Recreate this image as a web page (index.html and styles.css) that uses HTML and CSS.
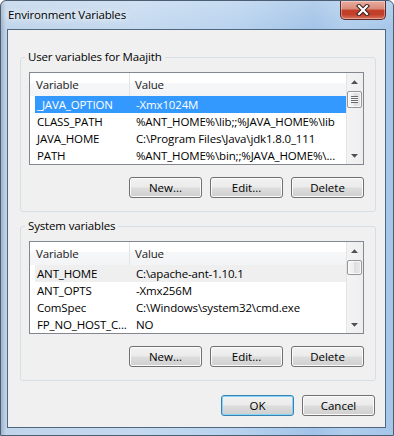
FILE: index.html
```html
<!DOCTYPE html>
<html>
<head>
<meta charset="utf-8">
<title>Environment Variables</title>
<link rel="stylesheet" href="styles.css">
</head>
<body>
<div class="window">
  <div class="titlebar">
    <div class="title">Environment Variables</div>
    <div class="close">
      <svg width="14" height="12" viewBox="0 0 14 12">
        <path d="M3 2 L11 10 M11 2 L3 10" stroke="#3a1e1e" stroke-width="4.2" stroke-linecap="square" fill="none"/>
        <path d="M3 2 L11 10 M11 2 L3 10" stroke="#ffffff" stroke-width="2.2" stroke-linecap="square" fill="none"/>
      </svg>
    </div>
  </div>
  <div class="client">
    <fieldset class="group">
      <legend>User variables for Maajith</legend>
      <div class="list">
        <div class="list-main">
          <div class="header"><div class="h1">Variable</div><div class="h2">Value</div></div>
          <div class="row sel"><div class="c1">_JAVA_OPTION</div><div class="c2">-Xmx1024M</div></div>
          <div class="row"><div class="c1">CLASS_PATH</div><div class="c2">%ANT_HOME%\lib;;%JAVA_HOME%\lib</div></div>
          <div class="row"><div class="c1">JAVA_HOME</div><div class="c2">C:\Program Files\Java\jdk1.8.0_111</div></div>
          <div class="row"><div class="c1">PATH</div><div class="c2">%ANT_HOME%\bin;;%JAVA_HOME%\...</div></div>
        </div>
        <div class="scroll">
          <div class="arrow"><svg width="7" height="4" viewBox="0 0 7 4"><path d="M0 4 L3.5 0.3 L7 4 Z" fill="#505050"/></svg></div>
          <div class="thumb"><span class="grip"></span></div>
          <div class="track"></div>
          <div class="arrow"><svg width="7" height="4" viewBox="0 0 7 4"><path d="M0 0 L3.5 3.7 L7 0 Z" fill="#505050"/></svg></div>
        </div>
      </div>
      <div class="buttons">
        <button class="btn">New...</button>
        <button class="btn">Edit...</button>
        <button class="btn">Delete</button>
      </div>
    </fieldset>
    <fieldset class="group">
      <legend>System variables</legend>
      <div class="list">
        <div class="list-main">
          <div class="header"><div class="h1">Variable</div><div class="h2">Value</div></div>
          <div class="row dim"><div class="c1">ANT_HOME</div><div class="c2">C:\apache-ant-1.10.1</div></div>
          <div class="row"><div class="c1">ANT_OPTS</div><div class="c2">-Xmx256M</div></div>
          <div class="row"><div class="c1">ComSpec</div><div class="c2">C:\Windows\system32\cmd.exe</div></div>
          <div class="row"><div class="c1">FP_NO_HOST_C...</div><div class="c2">NO</div></div>
        </div>
        <div class="scroll">
          <div class="arrow"><svg width="7" height="4" viewBox="0 0 7 4"><path d="M0 4 L3.5 0.3 L7 4 Z" fill="#505050"/></svg></div>
          <div class="thumb small"></div>
          <div class="track"></div>
          <div class="arrow"><svg width="7" height="4" viewBox="0 0 7 4"><path d="M0 0 L3.5 3.7 L7 0 Z" fill="#505050"/></svg></div>
        </div>
      </div>
      <div class="buttons">
        <button class="btn">New...</button>
        <button class="btn">Edit...</button>
        <button class="btn">Delete</button>
      </div>
    </fieldset>
    <div class="dialog-buttons">
      <button class="btn default">OK</button>
      <button class="btn">Cancel</button>
    </div>
  </div>
</div>
</body>
</html>
```
FILE: styles.css
```css
* { box-sizing: border-box; }
html, body { margin: 0; padding: 0; }
body {
  width: 394px;
  height: 436px;
  overflow: hidden;
  background: #ffffff;
  font-family: "Open Sans", "Noto Sans", sans-serif;
  font-size: 11.5px;
  letter-spacing: -0.15px;
  color: #000;
}
.window {
  width: 394px;
  height: 436px;
  display: flex;
  flex-direction: column;
  border: 1px solid #4b5e74;
  border-radius: 6px 6px 0 0;
  background:
    linear-gradient(to bottom, rgba(255,255,255,0.2), rgba(255,255,255,0) 30px),
    linear-gradient(to right, #9fb3c9 0px, #c0d5ea 5px, #c4d9ef 35%, #b8d2ee 60%, #a2c3e8 80%, #b0cdec 88%, #a6c6e9 100%);
}
.titlebar {
  height: 28px;
  display: flex;
  align-items: flex-start;
}
.title {
  flex: 1;
  padding: 6px 0 0 7px;
  line-height: 16px;
  font-size: 11.5px;
  color: #000;
  text-shadow: 0 0 6px #ffffff, 0 0 10px rgba(255,255,255,0.9);
}
.close {
  width: 46px;
  height: 19px;
  margin-right: 7px;
  border: 1px solid #5a2b28;
  border-top: none;
  border-radius: 0 0 5px 5px;
  background: linear-gradient(to bottom, #e8ad9f 0%, #d98a79 45%, #c2402a 50%, #c23f29 75%, #d8735f 100%);
  box-shadow: inset 0 0 0 1px rgba(255,255,255,0.35);
  display: flex;
  align-items: center;
  justify-content: center;
}
.client {
  margin: 0 7px 0 6px;
  height: 399px;
  border: 1px solid #4f6681;
  background: #f0f0f0;
  padding: 20px 9px 0 12px;
  display: flex;
  flex-direction: column;
}
.group {
  margin: 0;
  padding: 8px 11px 13px 8px;
  border: 1px solid #d5dfe5;
  border-radius: 3px;
  min-width: 0;
}
.group + .group { margin-top: 7px; }
.group legend {
  padding: 0 3px;
  margin-left: -4px;
  line-height: 14px;
}
.list {
  height: 93px;
  border: 1px solid #828790;
  background: #ffffff;
  display: flex;
}
.list-main { flex: 1; min-width: 0; }
.header {
  height: 23px;
  display: flex;
  background: linear-gradient(to bottom, #ffffff 0, #ffffff 42%, #f6f7f8 42%, #f3f4f6 100%);
  line-height: 23px;
  color: #1a1a1a;
}
.h1 {
  width: 100px;
  padding-left: 6px;
  border-right: 1px solid #e3e5e8;
}
.h2 { flex: 1; padding-left: 5px; }
.row {
  height: 17px;
  line-height: 17px;
  margin-left: 5px;
  display: flex;
  white-space: nowrap;
}
.row .c1 { width: 94px; padding-left: 2px; overflow: hidden; }
.row .c2 { flex: 1; min-width: 0; padding-left: 7px; overflow: hidden; }
.row.sel { background: #3399ff; color: #ffffff; }
.row.dim { background: #efefef; }
.scroll {
  width: 17px;
  display: flex;
  flex-direction: column;
  background: linear-gradient(to right, #e4e4e4 0, #e4e4e4 1px, #f3f3f3 1px, #eeeeee 100%);
}
.arrow {
  height: 17px;
  display: flex;
  align-items: center;
  justify-content: center;
}
.thumb {
  height: 17px;
  margin: 1px 1px 0 1px;
  border: 1px solid #969696;
  border-radius: 2px;
  background: linear-gradient(to right, #f6f6f6 0, #ececec 50%, #dedede 50%, #e8e8e8 100%);
  box-shadow: inset 0 0 0 1px rgba(255,255,255,0.7);
  display: flex;
  align-items: center;
  justify-content: center;
}
.thumb.small { height: 15px; }
.grip {
  width: 7px;
  height: 7px;
  background: repeating-linear-gradient(to bottom, #6a6a6a 0, #6a6a6a 1px, #f8f8f8 1px, #f8f8f8 2px);
}
.track { flex: 1; }
.buttons {
  display: flex;
  justify-content: flex-end;
  gap: 8px;
  margin-top: 12px;
}
.btn {
  width: 73px;
  height: 21px;
  padding: 0;
  font: inherit;
  line-height: 19px;
  color: #000;
  border: 1px solid #707070;
  border-radius: 3px;
  background: linear-gradient(to bottom, #f2f2f2 0, #ebebeb 48%, #dddddd 52%, #cfcfcf 100%);
  box-shadow: inset 0 0 0 1px #fbfbfb;
}
.btn.default {
  border-color: #3c7fb1;
  box-shadow: inset 0 0 0 1px #7fd8f7;
}
.dialog-buttons {
  display: flex;
  justify-content: flex-end;
  gap: 8px;
  margin-top: 14px;
  padding-right: 1px;
}
```
